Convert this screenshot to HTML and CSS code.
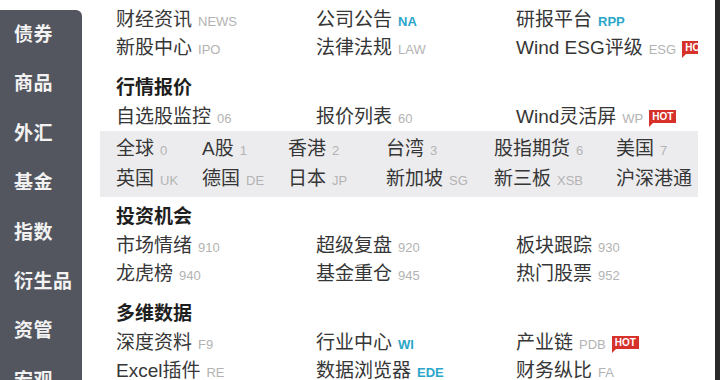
FILE: index.html
```html
<!DOCTYPE html>
<html lang="zh-CN">
<head>
    <meta charset="UTF-8">
    <meta name="viewport" content="width=device-width, initial-scale=1.0">
    <title>Wind 功能导航</title>
    <link rel="stylesheet" href="styles.css">
</head>
<body>
    <div class="page">
        <!-- 左侧分类 -->
        <nav class="side">
            <div class="side-item">债券</div>
            <div class="side-item">商品</div>
            <div class="side-item">外汇</div>
            <div class="side-item">基金</div>
            <div class="side-item">指数</div>
            <div class="side-item">衍生品</div>
            <div class="side-item">资管</div>
            <div class="side-item">宏观</div>
        </nav>

        <!-- 功能面板 -->
        <main class="panel">
            <section class="group first">
                <h3 class="group-title">资讯研究</h3>
                <div class="links">
                    <div class="link">财经资讯<span class="code">NEWS</span></div>
                    <div class="link">公司公告<span class="code blue">NA</span></div>
                    <div class="link">研报平台<span class="code blue">RPP</span></div>
                    <div class="link">新股中心<span class="code">IPO</span></div>
                    <div class="link">法律法规<span class="code">LAW</span></div>
                    <div class="link">Wind ESG评级<span class="code">ESG</span><span class="hot">HOT</span></div>
                </div>
            </section>

            <section class="group">
                <h3 class="group-title">行情报价</h3>
                <div class="links">
                    <div class="link">自选股监控<span class="code">06</span></div>
                    <div class="link">报价列表<span class="code">60</span></div>
                    <div class="link">Wind灵活屏<span class="code">WP</span><span class="hot">HOT</span></div>
                </div>
                <div class="markets">
                    <div class="link">全球<span class="code">0</span></div>
                    <div class="link">A股<span class="code">1</span></div>
                    <div class="link">香港<span class="code">2</span></div>
                    <div class="link">台湾<span class="code">3</span></div>
                    <div class="link">股指期货<span class="code">6</span></div>
                    <div class="link">美国<span class="code">7</span></div>
                    <div class="link">英国<span class="code">UK</span></div>
                    <div class="link">德国<span class="code">DE</span></div>
                    <div class="link">日本<span class="code">JP</span></div>
                    <div class="link">新加坡<span class="code">SG</span></div>
                    <div class="link">新三板<span class="code">XSB</span></div>
                    <div class="link">沪深港通</div>
                </div>
            </section>

            <section class="group after-box">
                <h3 class="group-title">投资机会</h3>
                <div class="links">
                    <div class="link">市场情绪<span class="code">910</span></div>
                    <div class="link">超级复盘<span class="code">920</span></div>
                    <div class="link">板块跟踪<span class="code">930</span></div>
                    <div class="link">龙虎榜<span class="code">940</span></div>
                    <div class="link">基金重仓<span class="code">945</span></div>
                    <div class="link">热门股票<span class="code">952</span></div>
                </div>
            </section>

            <section class="group">
                <h3 class="group-title">多维数据</h3>
                <div class="links">
                    <div class="link">深度资料<span class="code">F9</span></div>
                    <div class="link">行业中心<span class="code blue">WI</span></div>
                    <div class="link">产业链<span class="code">PDB</span><span class="hot">HOT</span></div>
                    <div class="link">Excel插件<span class="code">RE</span></div>
                    <div class="link">数据浏览器<span class="code blue">EDE</span></div>
                    <div class="link">财务纵比<span class="code">FA</span></div>
                </div>
            </section>
        </main>

        <div class="spacer"></div>
        <div class="edge"></div>
    </div>
</body>
</html>
```

FILE: styles.css
```css
html, body {
    margin: 0;
    padding: 0;
    background: #fff;
}
body {
    font-family: "Liberation Sans", "Noto Sans CJK SC", sans-serif;
    overflow: hidden;
}
.page {
    display: flex;
    width: 720px;
    height: 380px;
    overflow: hidden;
}
.side {
    width: 82px;
    flex: none;
    margin-top: 10px;
    background: #53565f;
    border-top-right-radius: 6px;
}
.side-item {
    height: 49.4px;
    line-height: 49.4px;
    padding-left: 14px;
    color: #f2f2f2;
    font-size: 19px;
    font-weight: 700;
    letter-spacing: 0.5px;
}
.panel {
    width: 616px;
    flex: none;
    padding-left: 34px;
    box-sizing: border-box;
    overflow: hidden;
    color: #363636;
}
.spacer {
    flex: 1;
}
.edge {
    width: 5px;
    background: #2a2a2a;
}
.group {
    margin-top: 11px;
}
.group.first {
    margin-top: -24px;
}
.group.after-box {
    margin-top: 5px;
}
.group-title {
    margin: 0;
    height: 30px;
    line-height: 30px;
    font-size: 19px;
    font-weight: 700;
    color: #1e1e1e;
}
.links {
    display: grid;
    grid-template-columns: 200px 200px 200px;
    grid-auto-rows: 28px;
}
.link {
    font-size: 19px;
    line-height: 28px;
    white-space: nowrap;
}
.code {
    margin-left: 6px;
    font-size: 13px;
    color: #b3b3b3;
}
.code.blue {
    color: #2aa6c9;
    font-weight: 700;
}
.hot {
    position: relative;
    display: inline-block;
    margin-left: 6px;
    padding: 0 3px;
    height: 13px;
    line-height: 14px;
    font-size: 10px;
    font-weight: 700;
    color: #fff;
    background: #d6322b;
    vertical-align: 3px;
}
.hot::after {
    content: "";
    position: absolute;
    left: 0;
    top: 100%;
    border-left: 4px solid #d6322b;
    border-bottom: 4px solid transparent;
}
.markets {
    display: grid;
    grid-template-columns: 86px 86px 98px 108px 122px auto;
    grid-auto-rows: 30px;
    margin-left: -16px;
    padding: 3px 0 3px 16px;
    background: #ececee;
}
.markets .link {
    line-height: 30px;
}
```
